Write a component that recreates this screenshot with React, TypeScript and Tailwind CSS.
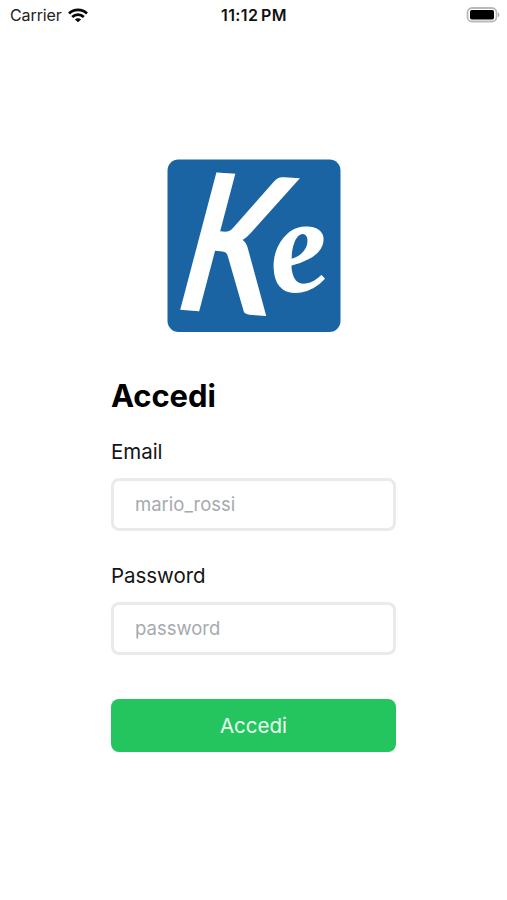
import React from "react";

function StatusBar() {
  return (
    <header className="grid h-[30px] grid-cols-3 items-center pl-[10px] pr-[9px] text-[#222]">
      <div className="flex items-center gap-[6px]">
        <span className="text-[16px] leading-[30px] tracking-[-0.1px]">Carrier</span>
        <svg width="20" height="15" viewBox="0 0 20 15" fill="none" stroke="#080808" strokeWidth="2.8">
          <path d="M1 5.4C6 .7 14 .7 19 5.4" />
          <path d="M4.2 9C7.5 5.9 12.5 5.9 15.8 9" />
          <path d="M10 14.2 6.9 11.4C8.6 9.8 11.4 9.8 13.1 11.4Z" fill="#080808" stroke="none" />
        </svg>
      </div>
      <span className="justify-self-center whitespace-nowrap text-[16px] font-semibold leading-[29px] tracking-[0.35px] text-[#111] [word-spacing:-1.5px]">11:12 PM</span>
      <svg className="-mr-[2px] justify-self-end" width="34" height="17" viewBox="0 0 34 17">
        <rect x="1.5" y="1" width="29" height="13.5" rx="4.5" fill="#fff" stroke="#b9b9b9" strokeWidth="1.8" />
        <rect x="4" y="3" width="24" height="9.5" rx="1.8" fill="#000" />
        <path d="M32 5.5v4.6c1.8-.7 1.8-3.9 0-4.6Z" fill="#aaa" />
      </svg>
    </header>
  );
}

function Logo() {
  return (
    <svg className="mx-auto mt-[129px] block overflow-visible" width="174" height="174" viewBox="0 0 174 174" role="img" aria-label="Ke">
      <rect x=".5" y=".5" width="173" height="172.5" rx="11" fill="#1a64a3" />
      <text transform="matrix(1.4 .1 -.5 1.9 2 150)" fontFamily="Lato, sans-serif" fontWeight="700" fontSize="100" fill="#fff">K</text>
      <text transform="translate(107 136) rotate(-8)" fontFamily="'Liberation Serif', serif" fontStyle="italic" fontWeight="700" fontSize="135" fill="#fff">e</text>
    </svg>
  );
}

function Field({ label, placeholder, type }: { label: string; placeholder: string; type: string }) {
  return (
    <label className="block">
      <span className="block text-[20.5px] leading-7 tracking-[-0.05px] text-[#151515]">{label}</span>
      <input
        type={type}
        placeholder={placeholder}
        className="mt-[12px] block h-[53px] w-full rounded-[8px] border-[3px] border-[#e9eaeb] bg-white px-[21px] pb-[2px] text-[18.5px] text-gray-700 placeholder:text-[#a6aaaf]"
      />
    </label>
  );
}

export default function App() {
  return (
    <main className="h-[900px] w-full overflow-hidden bg-white font-['Inter',sans-serif]">
      <StatusBar />
      <Logo />
      <form className="mx-auto mt-[43px] w-[285px]" onSubmit={(e) => e.preventDefault()}>
        <h1 className="text-[31px] font-bold leading-10 tracking-[-0.1px] text-black">Accedi</h1>
        <div className="mt-[22px] flex flex-col gap-[31px]">
          <Field label="Email" placeholder="mario_rossi" type="text" />
          <Field label="Password" placeholder="password" type="password" />
        </div>
        <button className="mt-[44px] h-[53px] w-full rounded-[8px] bg-[#24c55f] pt-[2px] text-[20.5px] text-[#eafff1]">Accedi</button>
      </form>
    </main>
  );
}
